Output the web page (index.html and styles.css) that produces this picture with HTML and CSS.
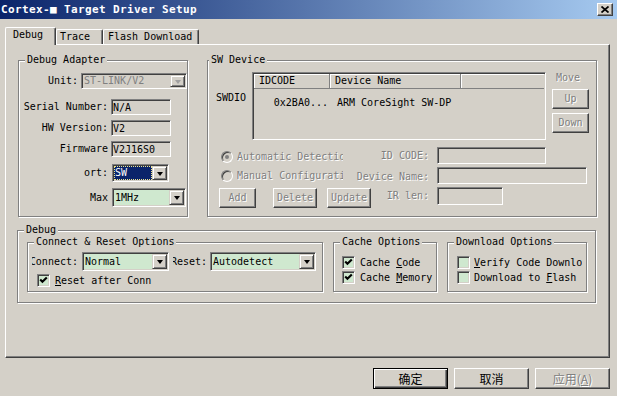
FILE: index.html
```html
<!DOCTYPE html>
<html>
<head>
<meta charset="utf-8">
<title>Cortex-M Target Driver Setup</title>
<link rel="stylesheet" href="styles.css">
</head>
<body>
<div class="titlebar">
  <span class="title">Cortex-■ Target Driver Setup</span>
  <span class="closebtn"><svg width="8" height="7" viewBox="0 0 8 7"><path d="M0.5 0.5L7.5 6.5M7.5 0.5L0.5 6.5" stroke="#000" stroke-width="1.7" fill="none"/></svg></span>
</div>
<div class="tabstrip">
  <div class="tab sel">Debug</div>
  <div class="tab t2">Trace</div>
  <div class="tab t3">Flash Download</div>
</div>
<div class="panel">
  <div class="row1">
    <div class="group ga">
      <span class="legend">Debug Adapter</span>
      <div class="frow r-unit">
        <span class="lbl lw59">Unit:</span>
        <div class="combo dis cw106"><span class="val">ST-LINK/V2</span><span class="arr"><i class="tri"></i></span></div>
      </div>
      <div class="frow r-f1">
        <span class="lbl lw89">Serial Number:</span>
        <div class="field fw60">N/A</div>
      </div>
      <div class="frow r-f2">
        <span class="lbl lw89">HW Version:</span>
        <div class="field fw60">V2</div>
      </div>
      <div class="frow r-f3">
        <span class="lbl lw89">Firmware</span>
        <div class="field fw60">V2J16S0</div>
      </div>
      <div class="frow r-port">
        <span class="lbl lw89">ort:</span>
        <div class="combo focus cw57"><span class="val"><span class="hl">SW</span></span><span class="arr"><i class="tri"></i></span></div>
      </div>
      <div class="frow r-max">
        <span class="lbl lw89">Max</span>
        <div class="combo green cw74"><span class="val">1MHz</span><span class="arr"><i class="tri"></i></span></div>
      </div>
    </div>
    <div class="group gb">
      <span class="legend lg-sw">SW Device</span>
      <div class="swtop">
        <div class="swdio">SWDIO</div>
        <div class="list">
          <div class="lhead">
            <span class="hc hc1">IDCODE</span>
            <span class="hc hc2">Device Name</span>
            <span class="hc hc3"></span>
          </div>
          <div class="lrow">
            <span class="lc1">0x2BA0...</span>
            <span class="lc2">ARM CoreSight SW-DP</span>
          </div>
        </div>
        <div class="movecol">
          <div class="movelbl dtext">Move</div>
          <div class="btn sbtn up dtext">Up</div>
          <div class="btn sbtn down dtext">Down</div>
        </div>
      </div>
      <div class="swbot">
        <div class="swleft">
          <div class="rrow r1"><span class="radio on"></span><span class="rtext dtext">Automatic Detection</span></div>
          <div class="rrow r2"><span class="radio"></span><span class="rtext dtext">Manual Configuration</span></div>
          <div class="swbtns">
            <div class="btn sbtn b-add dtext">Add</div>
            <div class="btn sbtn b-del dtext">Delete</div>
            <div class="btn sbtn b-upd dtext">Update</div>
          </div>
        </div>
        <div class="swright">
          <span class="rl dtext">ID CODE:</span><div class="field dfield w109"></div>
          <span class="rl dtext rl2">Device Name:</span><div class="field dfield w150"></div>
          <span class="rl dtext">IR len:</span><div class="field dfield w66"></div>
        </div>
      </div>
    </div>
  </div>
  <div class="group gc">
    <span class="legend">Debug</span>
    <div class="group gd">
      <span class="legend">Connect &amp; Reset Options</span>
      <div class="crow">
        <span class="clip cl1"><span>Connect:</span></span>
        <div class="combo green cw87"><span class="val">Normal</span><span class="arr"><i class="tri"></i></span></div>
        <span class="clip cl2"><span>Reset:</span></span>
        <div class="combo green cw106b"><span class="val">Autodetect</span><span class="arr"><i class="tri"></i></span></div>
      </div>
      <div class="chk-row rac">
        <span class="chk on"><svg width="9" height="9" viewBox="0 0 9 9"><path d="M1.2 3.6L3.4 5.8L7.8 1.4" stroke="#000" stroke-width="2.1" fill="none"/></svg></span>
        <span class="ctext"><u>R</u>eset after Conn</span>
      </div>
    </div>
    <div class="group ge">
      <span class="legend">Cache Options</span>
      <div class="chk-row cc1">
        <span class="chk on"><svg width="9" height="9" viewBox="0 0 9 9"><path d="M1.2 3.6L3.4 5.8L7.8 1.4" stroke="#000" stroke-width="2.1" fill="none"/></svg></span>
        <span class="ctext">Cache <u>C</u>ode</span>
      </div>
      <div class="chk-row cc2">
        <span class="chk on"><svg width="9" height="9" viewBox="0 0 9 9"><path d="M1.2 3.6L3.4 5.8L7.8 1.4" stroke="#000" stroke-width="2.1" fill="none"/></svg></span>
        <span class="ctext">Cache <u>M</u>emory</span>
      </div>
    </div>
    <div class="group gf">
      <span class="legend">Download Options</span>
      <div class="chk-row cc1 dl">
        <span class="chk"></span>
        <span class="ctext dclip"><u>V</u>erify Code Download</span>
      </div>
      <div class="chk-row cc2 dl">
        <span class="chk"></span>
        <span class="ctext dclip">Download to <u>F</u>lash</span>
      </div>
    </div>
  </div>
</div>
<div class="btnrow">
  <div class="btn dbtn default">确定</div>
  <div class="btn dbtn">取消</div>
  <div class="btn dbtn dtext">应用(<u>A</u>)</div>
</div>
</body>
</html>
```
FILE: styles.css
```css
* { box-sizing: border-box; }
body {
  margin: 0;
  width: 617px;
  height: 396px;
  overflow: hidden;
  background: #d4d0c8;
  font-family: "DejaVu Sans Mono", "Liberation Mono", monospace;
  font-size: 10px;
  line-height: 12px;
  color: #000;
}
u { text-decoration: underline; text-underline-offset: 1px; }

/* title bar */
.titlebar {
  height: 19px;
  background: linear-gradient(to right, #0a246a, #a6caf0);
  display: flex;
  align-items: center;
  padding-left: 1px;
}
.title {
  color: #fff;
  font-weight: bold;
  font-size: 11px;
  letter-spacing: 0.38px;
  white-space: nowrap;
}
.closebtn {
  margin-left: auto;
  margin-right: 4px;
  width: 16px;
  height: 13px;
  background: #d4d0c8;
  border: 1px solid;
  border-color: #fff #404040 #404040 #fff;
  box-shadow: inset -1px -1px #808080;
  display: flex;
  align-items: center;
  justify-content: center;
}

/* tabs */
.tabstrip {
  display: flex;
  align-items: flex-end;
  height: 25px;
  padding-left: 5px;
  position: relative;
  z-index: 1;
}
.tab {
  background: #d4d0c8;
  border-top: 1px solid #fff;
  border-left: 1px solid #fff;
  border-right: 1px solid #404040;
  box-shadow: inset -1px 0 #808080;
  border-radius: 2px 2px 0 0;
  height: 15px;
  padding-top: 1px;
  white-space: nowrap;
}
.tab.sel { width: 51px; height: 18px; margin-bottom: -1px; padding-left: 7px; }
.tab.t2 { width: 47px; padding-left: 3px; }
.tab.t3 { width: 96px; padding-left: 4px; }

/* main panel */
.panel {
  margin-left: 5px;
  width: 605px;
  height: 314px;
  border: 1px solid;
  border-color: #fff #404040 #404040 #fff;
  box-shadow: inset -1px -1px #808080;
  padding: 15px 0 0 12px;
}

/* group boxes */
.group {
  position: relative;
  border: 1px solid #808080;
  box-shadow: inset 1px 1px #fff, 1px 1px #fff;
}
.legend {
  position: absolute;
  top: -7px;
  left: 6px;
  padding: 0 2px;
  background: #d4d0c8;
  white-space: nowrap;
}
.lg-sw { left: 1px; }

.row1 { display: flex; height: 158px; }
.ga { width: 170px; height: 157px; padding-top: 12px; }
.gb { width: 390px; height: 157px; margin-left: 19px; padding-top: 11px; }

/* form rows */
.frow { display: flex; align-items: center; }
.lbl { text-align: right; white-space: nowrap; margin-right: 3px; }
.lw59 { width: 59px; }
.lw89 { width: 89px; }
.r-unit { height: 16px; margin-bottom: 10px; }
.r-f1, .r-f2 { height: 16px; margin-bottom: 5px; }
.r-f3 { height: 16px; margin-bottom: 7px; }
.r-port { height: 18px; margin-bottom: 6px; }
.r-max { height: 19px; }
.r-port .lbl, .r-max .lbl { margin-right: 4px; }

.field {
  height: 16px;
  border: 1px solid;
  border-color: #808080 #fff #fff #808080;
  box-shadow: inset 1px 1px #404040, inset -1px -1px #d4d0c8;
  padding: 1px 1px 0 1px;
  line-height: 13px;
  background: #d4d0c8;
  white-space: nowrap;
}
.fw60 { width: 60px; }

/* combo boxes */
.combo {
  display: flex;
  height: 100%;
  border: 1px solid;
  border-color: #808080 #fff #fff #808080;
  box-shadow: inset 1px 1px #404040, inset -1px -1px #d4d0c8;
  padding: 1px;
  background: #d4d0c8;
}
.combo .val {
  flex: 1;
  display: flex;
  align-items: center;
  padding-left: 1px;
  white-space: nowrap;
  overflow: hidden;
}
.combo .arr {
  width: 15px;
  border: 1px solid;
  border-color: #d4d0c8 #404040 #404040 #d4d0c8;
  box-shadow: inset 1px 1px #fff, inset -1px -1px #808080;
  background: #d4d0c8;
  display: flex;
  align-items: center;
  justify-content: center;
}
.tri {
  display: block;
  width: 0;
  height: 0;
  border-left: 3.5px solid transparent;
  border-right: 3.5px solid transparent;
  border-top: 4px solid #000;
  margin-top: 1px;
}
.dis .val { color: #808080; }
.dis .tri { border-top-color: #a0a0a0; }
.cw106 { width: 106px; }
.cw57 { width: 57px; }
.cw74 { width: 74px; }
.cw87 { width: 87px; }
.cw106b { width: 106px; }
.green { background: #cfe8cf; }
.focus .val { background: #0a246a; padding: 0; }
.focus .hl {
  display: block;
  width: 100%;
  height: 100%;
  color: #fff;
  padding-left: 1px;
  line-height: 14px;
  outline: 1px dotted #f0e68c;
  outline-offset: -1px;
}

/* SW device */
.swtop { display: flex; height: 68px; }
.swdio { width: 44px; padding-left: 8px; padding-top: 20px; }
.list {
  width: 294px;
  height: 68px;
  border: 1px solid;
  border-color: #808080 #fff #fff #808080;
  box-shadow: inset 1px 1px #404040, inset -1px -1px #d4d0c8;
  padding: 1px;
  background: #d4d0c8;
}
.lhead { display: flex; height: 15px; }
.hc {
  height: 15px;
  border-right: 1px solid #808080;
  border-bottom: 1px solid #808080;
  box-shadow: inset 1px 1px #fff;
  padding-left: 5px;
  line-height: 14px;
  white-space: nowrap;
}
.hc1 { width: 76px; }
.hc2 { width: 131px; }
.hc3 { flex: 1; border-right: none; }
.lrow { display: flex; margin-top: 8px; white-space: nowrap; }
.lc1 { width: 76px; text-align: right; padding-right: 2px; }
.lc2 { padding-left: 7px; }

.movecol { width: 37px; margin-left: 6px; }
.movelbl { padding-left: 4px; }
.dtext { color: #808080; text-shadow: 1px 1px 0 #fff; }

.btn {
  display: flex;
  align-items: center;
  justify-content: center;
  border: 1px solid;
  border-color: #fff #404040 #404040 #fff;
  box-shadow: inset -1px -1px #808080;
  background: #d4d0c8;
  white-space: nowrap;
}
.sbtn { height: 20px; }
.up { width: 37px; margin-top: 5px; }
.down { width: 37px; margin-top: 4px; }

.swbot { display: flex; margin-top: 7px; }
.swleft { margin-left: 11px; width: 130px; flex-shrink: 0; }
.rrow { display: flex; align-items: center; height: 12px; }
.rrow.r1 { margin-top: 4px; }
.rrow.r2 { margin-top: 7px; }
.radio {
  position: relative;
  width: 12px;
  height: 12px;
  margin-left: 2px;
  flex-shrink: 0;
  border-radius: 50%;
  border: 1px solid;
  border-color: #808080 #fff #fff #808080;
  box-shadow: inset 1px 1px #404040, inset -1px -1px #d4d0c8;
  background: #d4d0c8;
}
.radio.on::after {
  content: "";
  position: absolute;
  left: 3px;
  top: 3px;
  width: 4px;
  height: 4px;
  border-radius: 50%;
  background: #808080;
}
.rtext { margin-left: 4px; width: 106px; flex-shrink: 0; overflow: hidden; white-space: nowrap; }
.swbtns { display: flex; margin-top: 6px; }
.b-add { width: 37px; flex-shrink: 0; }
.b-del { width: 44px; flex-shrink: 0; margin-left: 17px; }
.b-upd { width: 44px; flex-shrink: 0; margin-left: 10px; }

.swright {
  margin-left: auto;
  margin-right: 9px;
  display: grid;
  grid-template-columns: auto 150px;
  grid-template-rows: 17px 17px 18px;
  column-gap: 8px;
  row-gap: 3px;
  align-items: center;
}
.rl { text-align: right; white-space: nowrap; }
.rl2 { padding-top: 2px; }
.dfield { height: 100%; }
.w109 { width: 109px; }
.w150 { width: 150px; }
.w66 { width: 66px; }

/* debug group */
.gc {
  width: 579px;
  height: 73px;
  margin-top: 12px;
  margin-left: -1px;
  display: flex;
  padding: 11px 0 0 9px;
}
.gd { width: 296px; height: 50px; margin-right: 10px; padding-top: 9px; }
.ge { width: 104px; height: 50px; margin-right: 10px; padding-top: 13px; padding-left: 8px; }
.gf { width: 140px; height: 50px; padding-top: 13px; padding-left: 9px; }

.crow { display: flex; align-items: center; height: 19px; }
.clip {
  display: flex;
  justify-content: flex-end;
  overflow: hidden;
  white-space: nowrap;
}
.clip > span { flex-shrink: 0; }
.cl1 { width: 46px; margin-left: 4px; margin-right: 4px; }
.cl2 { width: 34px; margin-left: 4px; margin-right: 3px; }

.chk-row { display: flex; align-items: center; height: 13px; }
.rac { margin-top: 3px; margin-left: 9px; }
.cc2 { margin-top: 2px; }
.chk {
  width: 13px;
  height: 13px;
  border: 1px solid;
  border-color: #808080 #fff #fff #808080;
  box-shadow: inset 1px 1px #404040, inset -1px -1px #d4d0c8;
  background: #cfe8cf;
  display: flex;
  align-items: center;
  justify-content: center;
  flex-shrink: 0;
}
.ctext { margin-left: 5px; white-space: nowrap; }
.dl .ctext { margin-left: 4px; }
.dclip { width: 108px; overflow: hidden; }

/* bottom buttons */
.btnrow {
  display: flex;
  justify-content: flex-end;
  gap: 6px;
  margin-top: 10px;
  padding-right: 7px;
}
.dbtn {
  width: 75px;
  height: 21px;
  font-family: "Noto Sans CJK SC", "DejaVu Sans", sans-serif;
  font-size: 12px;
}
.default {
  border: 1px solid #000;
  box-shadow: inset 1px 1px #fff, inset -1px -1px #404040, inset -2px -2px #808080;
}
```
